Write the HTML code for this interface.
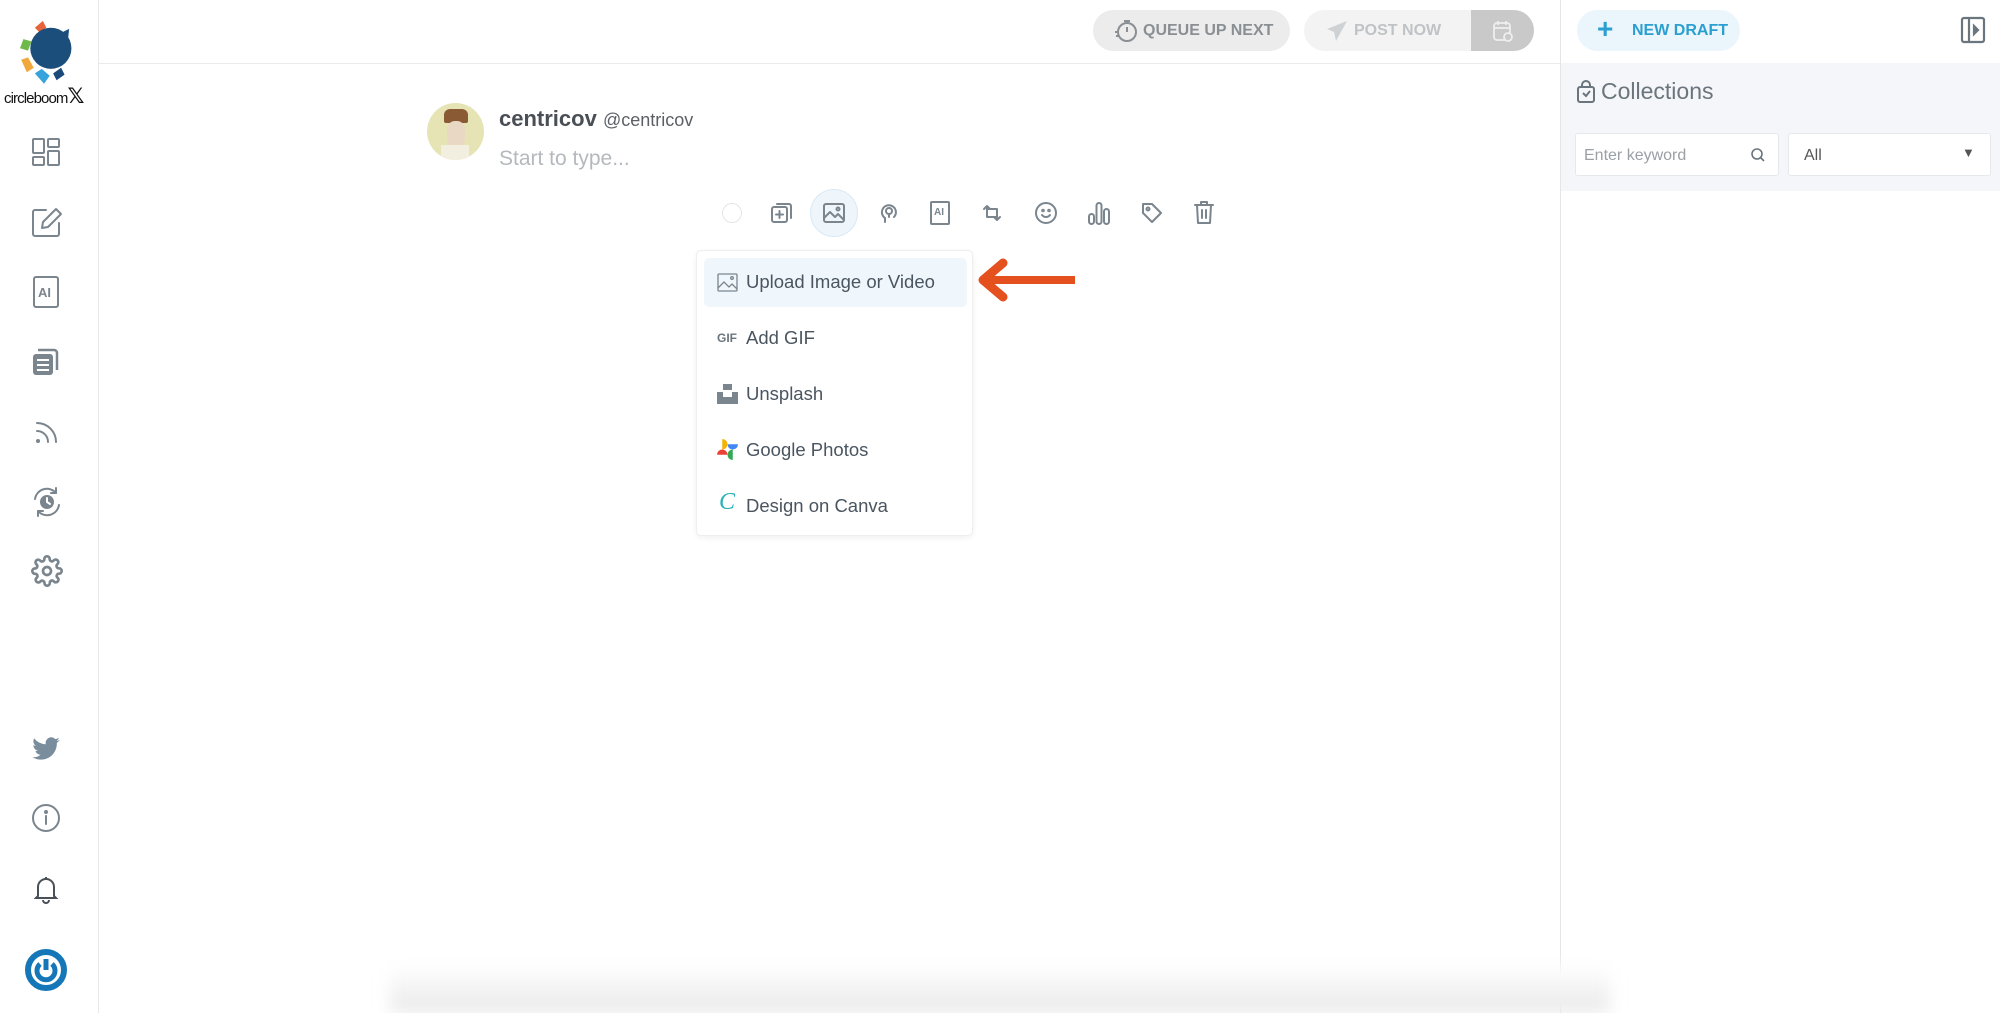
<!DOCTYPE html>
<html><head><meta charset="utf-8">
<style>
*{margin:0;padding:0;box-sizing:border-box}
body{width:2000px;height:1013px;overflow:hidden;background:#fff;font-family:"Liberation Sans",sans-serif;position:relative;color:#4a5560}
.abs{position:absolute}
.sb{left:0;top:0;width:99px;height:1013px;border-right:1px solid #e6e8ea;background:#fff}
.hdr{left:99px;top:63px;width:1461px;height:1px;background:#e8eaec}
.rp{left:1560px;top:0;width:440px;height:1013px;border-left:1px solid #e3e5e7}
.ic{stroke:#7a858e;fill:none;stroke-width:2;stroke-linecap:round;stroke-linejoin:round}
.item{position:absolute;left:0;width:277px;height:48px;font-size:18.5px;color:#4a5560;display:flex;align-items:center;padding-left:49px}
</style></head><body>
<div class="abs sb"></div>
<div class="abs hdr"></div>
<div class="abs rp"></div>
<div class="abs" style="left:1561px;top:63px;width:439px;height:128px;background:#f4f6f9"></div>
<div class="abs" style="left:390px;top:965px;width:1220px;height:48px;background:linear-gradient(#fff,#e8e8e8);filter:blur(8px)"></div>

<!-- logo -->
<svg class="abs" style="left:12px;top:14px" width="80" height="80" viewBox="0 0 70 70">
<path d="M20 12 L27 6 L30 12 L24 16Z" fill="#e8623a"/>
<path d="M7 30 L10 22 L17 24 L14 32Z" fill="#6db94a"/>
<path d="M8 40 L14 38 L19 47 L13 51Z" fill="#f0a73b"/>
<path d="M20 52 L26 48 L33 54 L28 61Z" fill="#36a3dc"/>
<path d="M36 52 L43 47 L46 53 L39 58Z" fill="#1a4a7a"/>
<circle cx="34" cy="30" r="18" fill="#1c4e7c"/>
<path d="M44 16 L50 13 L49 22Z" fill="#1c4e7c"/>
</svg>
<div class="abs" style="left:4px;top:84px;font-size:15px;letter-spacing:-0.9px;color:#111">circleboom<span style="font-size:21px;font-family:'DejaVu Sans';font-weight:bold">𝕏</span></div>

<!-- sidebar icons -->
<svg class="abs ic" style="left:31px;top:137px" width="30" height="30" viewBox="0 0 30 30"><rect x="2" y="2" width="11" height="14" rx="1"/><rect x="17" y="2" width="11" height="8" rx="1"/><rect x="2" y="20" width="11" height="8" rx="1"/><rect x="17" y="14" width="11" height="14" rx="1"/></svg>
<svg class="abs ic" style="left:30px;top:206px" width="34" height="34" viewBox="0 0 34 34"><path d="M16 4H5a2 2 0 0 0-2 2v22a2 2 0 0 0 2 2h22a2 2 0 0 0 2-2V17"/><path d="M26 3l5 5-13 13-6 1 1-6z"/></svg>
<svg class="abs ic" style="left:31px;top:275px" width="30" height="34" viewBox="0 0 30 34"><rect x="3" y="2" width="24" height="30" rx="2"/><text x="7" y="22" font-size="13" font-weight="bold" fill="#7a858e" stroke="none" font-family="Liberation Sans">AI</text></svg>
<svg class="abs" style="left:31px;top:347px" width="30" height="30" viewBox="0 0 30 30"><rect x="2" y="7" width="20" height="21" rx="3" fill="#7a858e"/><path d="M7 3h16a3 3 0 0 1 3 3v17" stroke="#7a858e" stroke-width="2.5" fill="none"/><path d="M6 13h12M6 18h12M6 23h12" stroke="#fff" stroke-width="2"/></svg>
<svg class="abs ic" style="left:33px;top:418px" width="28" height="28" viewBox="0 0 28 28"><circle cx="5" cy="23" r="2" fill="#7a858e" stroke="none"/><path d="M4 13a11 11 0 0 1 11 11M4 5a19 19 0 0 1 19 19"/></svg>
<svg class="abs ic" style="left:30px;top:485px" width="34" height="34" viewBox="0 0 34 34"><path d="M5 14a12 12 0 0 1 21-6M29 20a12 12 0 0 1-21 6"/><path d="M26 3v5h-5M8 31v-5h5"/><circle cx="17" cy="17" r="7" fill="#7a858e" stroke="none"/><path d="M17 13v4l3 2" stroke="#fff"/></svg>
<svg class="abs ic" style="left:31px;top:555px" width="32" height="32" viewBox="0 0 24 24" stroke-width="1.4"><circle cx="12" cy="12" r="3"/><path d="M19.4 15a1.7 1.7 0 0 0 .3 1.8l.1.1a2 2 0 1 1-2.8 2.8l-.1-.1a1.7 1.7 0 0 0-1.8-.3 1.7 1.7 0 0 0-1 1.5V21a2 2 0 1 1-4 0v-.1a1.7 1.7 0 0 0-1.1-1.5 1.7 1.7 0 0 0-1.8.3l-.1.1a2 2 0 1 1-2.8-2.8l.1-.1a1.7 1.7 0 0 0 .3-1.8 1.7 1.7 0 0 0-1.5-1H3a2 2 0 1 1 0-4h.1a1.7 1.7 0 0 0 1.5-1.1 1.7 1.7 0 0 0-.3-1.8l-.1-.1a2 2 0 1 1 2.8-2.8l.1.1a1.7 1.7 0 0 0 1.8.3H9a1.7 1.7 0 0 0 1-1.5V3a2 2 0 1 1 4 0v.1a1.7 1.7 0 0 0 1 1.5 1.7 1.7 0 0 0 1.8-.3l.1-.1a2 2 0 1 1 2.8 2.8l-.1.1a1.7 1.7 0 0 0-.3 1.8V9a1.7 1.7 0 0 0 1.5 1H21a2 2 0 1 1 0 4h-.1a1.7 1.7 0 0 0-1.5 1z"/></svg>
<svg class="abs" style="left:31px;top:737px" width="30" height="26" viewBox="0 0 24 20"><path d="M23 2a9 9 0 0 1-2.6.8A4.6 4.6 0 0 0 22.4.2a9 9 0 0 1-2.9 1.1A4.5 4.5 0 0 0 11.8 5.4 12.8 12.8 0 0 1 2.5.7a4.5 4.5 0 0 0 1.4 6 4.5 4.5 0 0 1-2-.6 4.5 4.5 0 0 0 3.6 4.5 4.5 4.5 0 0 1-2 .1 4.5 4.5 0 0 0 4.2 3.1A9 9 0 0 1 1 15.7 12.8 12.8 0 0 0 7.9 17.7c8.3 0 12.8-6.9 12.8-12.8v-.6A9 9 0 0 0 23 2z" fill="#7a8d9c"/></svg>
<svg class="abs ic" style="left:31px;top:803px" width="30" height="30" viewBox="0 0 30 30" stroke-width="1.8"><circle cx="15" cy="15" r="13"/><path d="M15 13v8"/><circle cx="15" cy="9" r="1" fill="#7a858e"/></svg>
<svg class="abs" style="left:31px;top:874px" width="30" height="30" viewBox="0 0 30 30" fill="none" stroke="#4a5058" stroke-width="2"><path d="M7 22V13a8 8 0 0 1 16 0v9l2 2H5z"/><path d="M12 26a3 3 0 0 0 6 0M15 3v2"/></svg>
<svg class="abs" style="left:25px;top:949px" width="42" height="42" viewBox="0 0 42 42"><circle cx="21" cy="21" r="18" fill="none" stroke="#1677b8" stroke-width="6"/><path d="M15 15a9 9 0 1 0 12 0" fill="none" stroke="#1677b8" stroke-width="5"/><path d="M21 10v11" stroke="#1677b8" stroke-width="5"/></svg>

<!-- top buttons -->
<div class="abs" style="left:1093px;top:10px;width:197px;height:41px;border-radius:21px;background:#ececec;font-size:16px;font-weight:bold;color:#8a8f94;display:flex;align-items:center;padding-left:50px">QUEUE UP NEXT</div>
<svg class="abs" style="left:1113px;top:18px" width="26" height="26" viewBox="0 0 26 26" fill="none" stroke="#8a8f94" stroke-width="2"><circle cx="14" cy="14" r="9"/><path d="M14 9v5M11 3h6M3 18h3M2 14h2"/></svg>
<div class="abs" style="left:1304px;top:10px;width:230px;height:41px;border-radius:21px;background:#f3f3f3;overflow:hidden">
<div style="position:absolute;left:167px;top:0;width:63px;height:41px;background:#c9c9c9"></div>
<div style="position:absolute;left:50px;top:12px;font-size:16px;font-weight:bold;color:#c0c3c6">POST NOW</div></div>
<svg class="abs" style="left:1326px;top:20px" width="22" height="22" viewBox="0 0 22 22"><path d="M21 1L1 9l7 3 2 9z" fill="#cfd2d5"/></svg>
<svg class="abs" style="left:1492px;top:19px" width="22" height="24" viewBox="0 0 22 24" fill="none" stroke="#eee" stroke-width="1.8"><rect x="2" y="4" width="16" height="17" rx="3"/><path d="M2 9h16M6 2v4M14 2v4"/><circle cx="16" cy="18" r="4" fill="#c9c9c9"/></svg>
<div class="abs" style="left:1577px;top:10px;width:163px;height:41px;border-radius:21px;background:#eaf5fc;font-size:16px;font-weight:bold;color:#2a9fd0;display:flex;align-items:center;padding-left:55px">NEW DRAFT</div>
<div class="abs" style="left:1597px;top:14px;font-size:28px;color:#2a9fd0;font-weight:bold;line-height:30px">+</div>
<svg class="abs" style="left:1960px;top:16px" width="26" height="28" viewBox="0 0 26 28" fill="none" stroke="#6b757d" stroke-width="2.2"><rect x="2" y="2" width="22" height="24" rx="2"/><path d="M9 2v24"/><path d="M14 10l4 4-4 4z" fill="#6b757d"/></svg>

<!-- collections -->
<svg class="abs" style="left:1576px;top:80px" width="20" height="24" viewBox="0 0 20 24" fill="none" stroke="#6b757d" stroke-width="2"><rect x="2" y="7" width="16" height="15" rx="2"/><path d="M6 7V5a4 4 0 0 1 8 0v2M7 13l3 3 4-5"/></svg>
<div class="abs" style="left:1601px;top:78px;font-size:23px;color:#6b757d">Collections</div>
<div class="abs" style="left:1575px;top:133px;width:204px;height:43px;background:#fff;border:1px solid #e6e9ec;border-radius:3px;font-size:16px;color:#9aa0a6;padding:13px 0 0 8px">Enter keyword</div>
<svg class="abs" style="left:1750px;top:147px" width="16" height="16" viewBox="0 0 16 16" fill="none" stroke="#6b757d" stroke-width="1.6"><circle cx="7" cy="7" r="5"/><path d="M11 11l3 3"/></svg>
<div class="abs" style="left:1788px;top:133px;width:203px;height:43px;background:#fff;border:1px solid #e6e9ec;border-radius:3px;font-size:16px;color:#555;padding:13px 0 0 15px">All</div>
<div class="abs" style="left:1962px;top:145px;font-size:13px;color:#555">▼</div>

<!-- composer -->
<div class="abs" style="left:427px;top:103px;width:57px;height:57px;border-radius:50%;background:#e6e4b5;overflow:hidden">
<div style="position:absolute;left:17px;top:6px;width:24px;height:14px;background:#8a5a35;border-radius:6px 6px 2px 2px"></div>
<div style="position:absolute;left:20px;top:18px;width:18px;height:26px;background:#e8d8c4;border-radius:8px"></div>
<div style="position:absolute;left:14px;top:42px;width:28px;height:16px;background:#f3efe0"></div></div>
<div class="abs" style="left:499px;top:106px;font-size:22px;font-weight:bold;color:#4a4f55">centricov <span style="font-size:18px;font-weight:normal;color:#5a6066">@centricov</span></div>
<div class="abs" style="left:499px;top:147px;font-size:21px;color:#b5b9bd">Start to type...</div>

<!-- toolbar -->
<div class="abs" style="left:722px;top:203px;width:20px;height:20px;border-radius:50%;border:1.5px solid #e3e5e7"></div>
<svg class="abs ic" style="left:770px;top:201px" width="24" height="24" viewBox="0 0 24 24" stroke-width="1.5"><rect x="2" y="6" width="15" height="15" rx="2"/><path d="M7 3h12a2 2 0 0 1 2 2v12M9.5 10v7M6 13.5h7"/></svg>
<div class="abs" style="left:810px;top:189px;width:48px;height:48px;border-radius:50%;background:#eef6fc;border:1px solid #d9e9f5"></div>
<svg class="abs ic" style="left:822px;top:201px" width="24" height="24" viewBox="0 0 24 24" stroke-width="1.5"><rect x="2" y="3" width="20" height="18" rx="2"/><path d="M2 17l6-6 5 5 3-3 6 6"/><circle cx="16" cy="8" r="1.5"/></svg>
<svg class="abs ic" style="left:877px;top:201px" width="24" height="24" viewBox="0 0 24 24" stroke-width="1.5"><path d="M8 21v-4a7 7 0 1 1 9-1"/><circle cx="12" cy="10" r="3"/><path d="M12 13v3"/></svg>
<svg class="abs ic" style="left:929px;top:200px" width="22" height="26" viewBox="0 0 22 26" stroke-width="1.5"><rect x="2" y="2" width="18" height="22" rx="1"/><text x="5" y="15" font-size="10" font-weight="bold" fill="#7a858e" stroke="none" font-family="Liberation Sans">AI</text></svg>
<svg class="abs ic" style="left:980px;top:201px" width="24" height="24" viewBox="0 0 24 24" stroke-width="1.5"><path d="M4 8l3-3 3 3M7 5v11h10M20 16l-3 3-3-3M17 19V8H7"/></svg>
<svg class="abs ic" style="left:1034px;top:201px" width="24" height="24" viewBox="0 0 24 24" stroke-width="1.5"><circle cx="12" cy="12" r="10"/><path d="M8 14a5 5 0 0 0 8 0"/><circle cx="9" cy="9.5" r=".8"/><circle cx="15" cy="9.5" r=".8"/></svg>
<svg class="abs ic" style="left:1087px;top:200px" width="24" height="26" viewBox="0 0 24 26" stroke-width="1.5"><rect x="2" y="14" width="5" height="10" rx="2.5"/><rect x="9.5" y="3" width="5" height="21" rx="2.5"/><rect x="17" y="9" width="5" height="15" rx="2.5"/></svg>
<svg class="abs ic" style="left:1140px;top:201px" width="24" height="24" viewBox="0 0 24 24" stroke-width="1.6"><path d="M3 3h9l9 9-9 9-9-9z"/><circle cx="8" cy="8" r="1.5"/></svg>
<svg class="abs ic" style="left:1193px;top:199px" width="22" height="26" viewBox="0 0 22 26" stroke-width="1.5"><path d="M2 6h18M8 6V3h6v3M4 6l1 18h12l1-18M9 11v8M13 11v8"/></svg>

<!-- dropdown -->
<div class="abs" style="left:696px;top:250px;width:277px;height:286px;background:#fff;border:1px solid #eceef0;border-radius:5px;box-shadow:0 2px 6px rgba(0,0,0,.06)">
<div style="position:absolute;left:7px;top:7px;width:263px;height:49px;background:#f0f7fc;border-radius:5px"></div>
<div class="item" style="top:7px;padding-left:49px">Upload Image or Video</div>
<div class="item" style="top:63px">Add GIF</div>
<div class="item" style="top:119px">Unsplash</div>
<div class="item" style="top:175px">Google Photos</div>
<div class="item" style="top:231px">Design on Canva</div>
<svg style="position:absolute;left:20px;top:22px" width="21" height="19" viewBox="0 0 21 19" fill="none" stroke="#7a858e" stroke-width="1.3"><rect x="1" y="1" width="19" height="17" rx="1"/><path d="M1 15l6-6 5 5 3-3 5 5"/><circle cx="15" cy="5" r="1.3"/></svg>
<div style="position:absolute;left:20px;top:80px;font-size:12px;font-weight:bold;color:#6b757d">GIF</div>
<svg style="position:absolute;left:20px;top:133px" width="21" height="20" viewBox="0 0 21 20"><rect x="6" y="0" width="9" height="6" fill="#7a858e"/><path d="M0 8h6v5h9V8h6v12H0z" fill="#7a858e"/></svg>
<svg style="position:absolute;left:20px;top:188px" width="21" height="21" viewBox="0 0 20 20"><path d="M10 0a5 5 0 0 1 0 10z" fill="#f4b400" transform="translate(-5 0)"/><path d="M10 10h10a5 5 0 0 1-10 0z" fill="#4285f4" transform="translate(0 -5)"/><path d="M10 10v10a5 5 0 0 1 0-10z" fill="#34a853" transform="translate(5 0)"/><path d="M0 10h10a5 5 0 0 0-10 0z" fill="#ea4335" transform="translate(0 5)"/></svg>
<div style="position:absolute;left:22px;top:238px;font-size:24px;font-style:italic;font-family:'Liberation Serif',serif;color:#2ab2b8">C</div>
</div>

<!-- arrow -->
<svg class="abs" style="left:975px;top:258px" width="105" height="44" viewBox="0 0 105 44"><path d="M100 22H14" stroke="#e4501e" stroke-width="8"/><path d="M28 5L8 22l20 17" stroke="#e4501e" stroke-width="9" fill="none" stroke-linecap="round" stroke-linejoin="round"/></svg>
</body></html>
